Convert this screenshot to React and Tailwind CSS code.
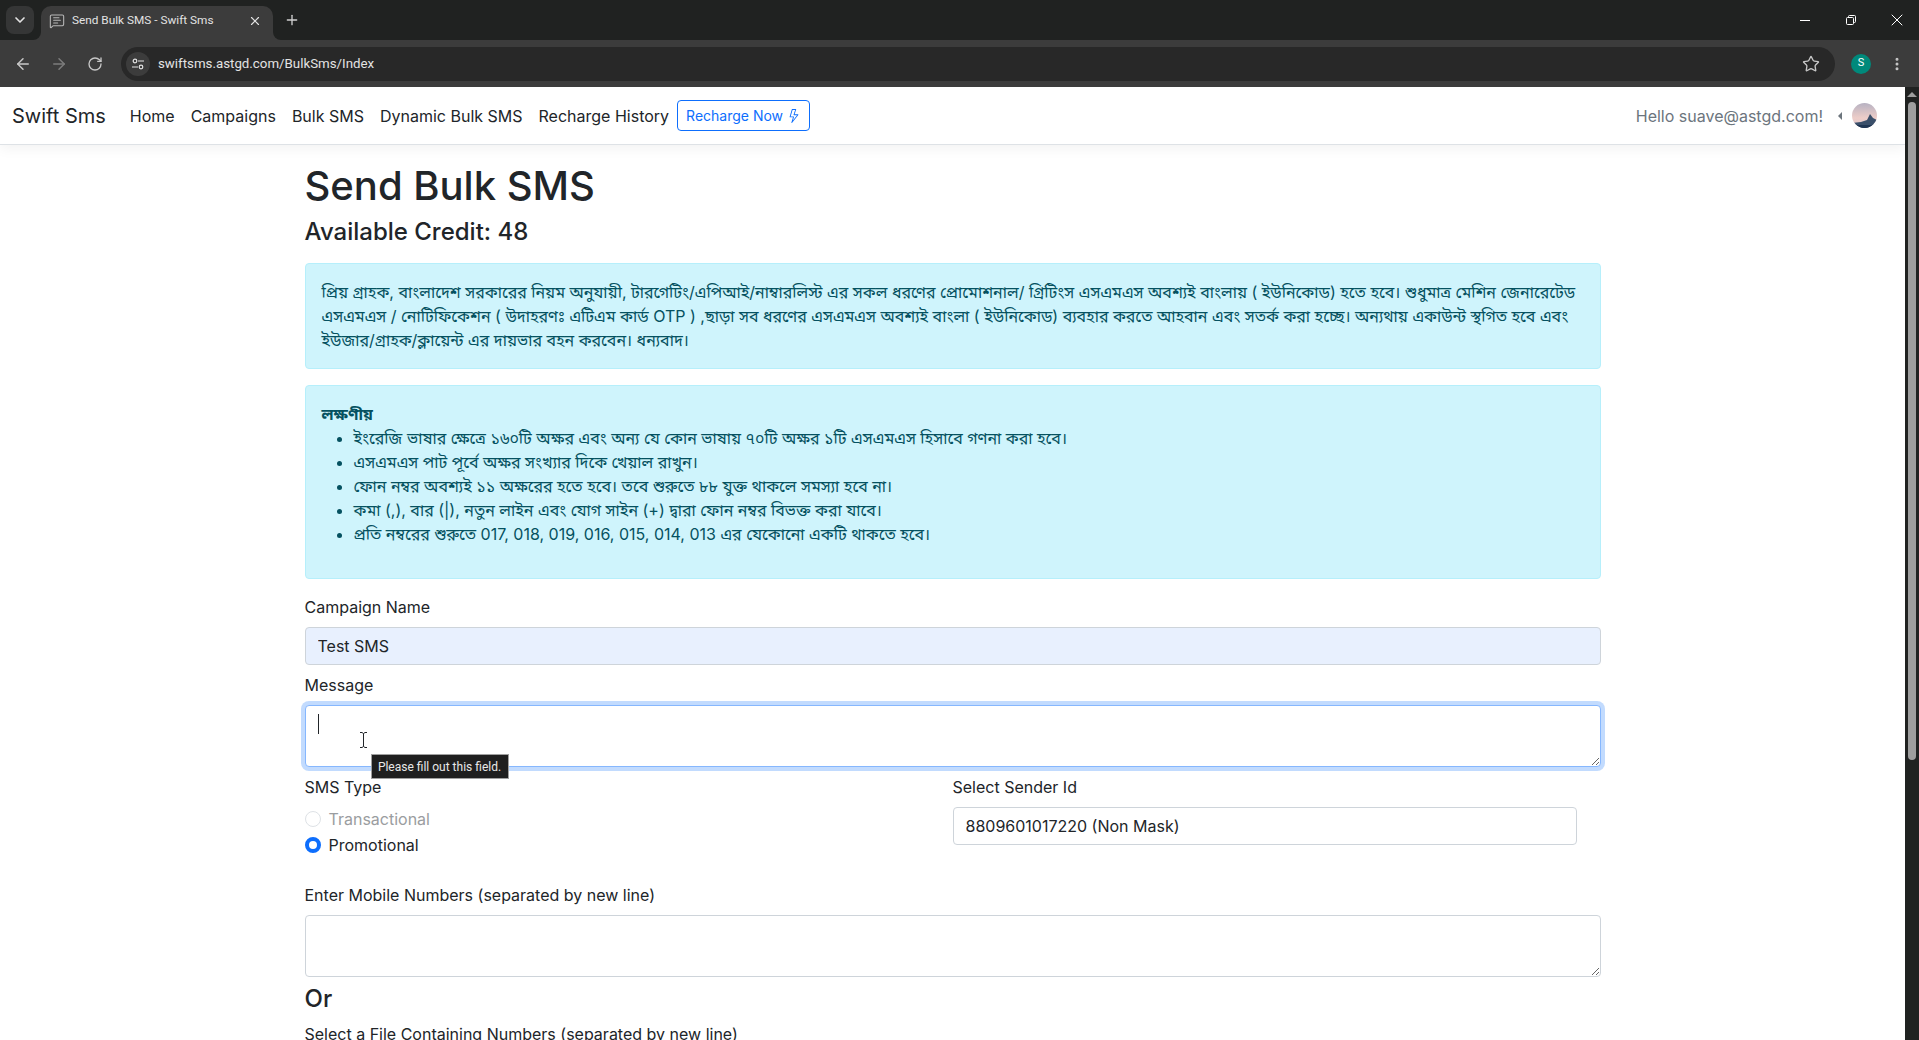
import React from 'react';
import { ArrowLeft, ArrowRight, ChevronDown, MessageSquareText, MoreVertical, Plus, RotateCw, Star, X } from 'lucide-react';

const inter = 'font-["Inter","Noto_Sans","Noto_Sans_Bengali","Liberation_Sans",sans-serif]';

const notes = [
    'ইংরেজি ভাষার ক্ষেত্রে ১৬০টি অক্ষর এবং অন্য যে কোন ভাষায় ৭০টি অক্ষর ১টি এসএমএস হিসাবে গণনা করা হবে।',
    'এসএমএস পাট পূর্বে অক্ষর সংখ্যার দিকে খেয়াল রাখুন।',
    'ফোন নম্বর অবশ্যই ১১ অক্ষরের হতে হবে। তবে শুরুতে ৮৮ যুক্ত থাকলে সমস্যা হবে না।',
    'কমা (,), বার (|), নতুন লাইন এবং যোগ সাইন (+) দ্বারা ফোন নম্বর বিভক্ত করা যাবে।',
    'প্রতি নম্বরের শুরুতে 017, 018, 019, 016, 015, 014, 013 এর যেকোনো একটি থাকতে হবে।',
];

const navLinks = ['Home', 'Campaigns', 'Bulk SMS', 'Dynamic Bulk SMS', 'Recharge History'];

// Browser window: tab strip and address bar
const BrowserChrome = () => (
    <div className='font-["Roboto",sans-serif]'>
        <div className="flex h-10 items-end bg-[#202221] pl-[6px]">
            <div className="mb-[6px] flex h-[28px] w-[28px] items-center justify-center rounded-lg bg-[#353636]">
                <ChevronDown className="h-4 w-4 text-[#e3e3e3]" strokeWidth={2.5} />
            </div>
            <div className="relative ml-[7px] flex h-[34px] w-[232px] items-center rounded-t-[10px] bg-[#3c3c3c] pb-[5px] pl-2 pr-[11px]">
                <span className="absolute -left-2 bottom-0 h-2 w-2 bg-[#3c3c3c]">
                    <span className="block h-2 w-2 rounded-br-lg bg-[#202221]" />
                </span>
                <span className="absolute -right-2 bottom-0 h-2 w-2 bg-[#3c3c3c]">
                    <span className="block h-2 w-2 rounded-bl-lg bg-[#202221]" />
                </span>
                <MessageSquareText className="h-4 w-4 text-[#b8b8b8]" strokeWidth={1.6} />
                <span className="ml-[7px] flex-1 text-[11.8px] text-[#e3e3e3]">Send Bulk SMS - Swift Sms</span>
                <X className="h-[14px] w-[14px] text-[#e3e3e3]" strokeWidth={2} />
            </div>
            <Plus className="mb-[12px] ml-[11px] h-4 w-4 text-[#d0d0d0]" strokeWidth={2} />
            <div className="flex-1" />
            <div className="mb-[10px] flex items-center pr-[12px] text-white">
                <span className="mr-[36px] h-px w-[10px] bg-white" />
                <svg className="mr-[31px] h-[10px] w-[10px]" viewBox="0 0 10 10" fill="none" stroke="currentColor" strokeWidth="1">
                    <rect x="0.5" y="2.5" width="7" height="7" rx="1" />
                    <path d="M2.5 2.5V1.5a1 1 0 0 1 1-1h5a1 1 0 0 1 1 1v5a1 1 0 0 1-1 1h-1" />
                </svg>
                <X className="h-5 w-5" strokeWidth={1.2} />
            </div>
        </div>
        <div className="flex h-[47px] items-center bg-[#3c3c3c] pl-[14px] pr-[14px]">
            <ArrowLeft className="h-[18px] w-[18px] text-[#c7c7c7]" strokeWidth={2} />
            <ArrowRight className="ml-[18px] h-[18px] w-[18px] text-[#7c7c7c]" strokeWidth={2} />
            <RotateCw className="ml-[19px] h-4 w-4 text-[#c7c7c7]" strokeWidth={2} />
            <div className="ml-[18px] flex h-[34px] flex-1 items-center rounded-full bg-[#282828] pl-[5px] pr-[15px]">
                <span className="flex h-6 w-6 items-center justify-center rounded-full bg-[#3c3c3c]">
                    <svg className="h-[14px] w-[14px] text-[#e3e3e3]" viewBox="0 0 14 14" fill="none" stroke="currentColor" strokeWidth="1.2">
                        <circle cx="4" cy="4" r="1.8" />
                        <path d="M7 4h6M1 10h6" />
                        <circle cx="10" cy="10" r="1.8" />
                    </svg>
                </span>
                <span className="ml-[8px] flex-1 text-[13.3px] text-[#e3e3e3]">swiftsms.astgd.com/BulkSms/Index</span>
                <Star className="h-[18px] w-[18px] text-[#c7c7c7]" strokeWidth={1.8} />
            </div>
            <span className="ml-[16px] flex h-5 w-5 items-center justify-center rounded-full bg-[#00897b] text-[11px] text-white">S</span>
            <MoreVertical className="ml-[18px] h-4 w-4 text-[#c7c7c7]" strokeWidth={2.5} />
        </div>
    </div>
);

const Avatar = () => (
    <svg className="h-[25px] w-[25px]" viewBox="0 0 25 25">
        <defs>
            <linearGradient id="sky" x1="0" y1="0" x2="0" y2="1">
                <stop offset="0" stopColor="#b7b2c2" />
                <stop offset="0.6" stopColor="#edcdc8" />
                <stop offset="1" stopColor="#dcc6cf" />
            </linearGradient>
            <clipPath id="round">
                <circle cx="12.5" cy="12.5" r="12.5" />
            </clipPath>
        </defs>
        <g clipPath="url(#round)">
            <rect width="25" height="25" fill="url(#sky)" />
            <path d="M0 20l9-1 6-2 3-6 3 4 4 2v8H0z" fill="#3a4f6a" />
            <path d="M0 22h25v3H0z" fill="#1f3553" />
        </g>
    </svg>
);

const Navbar = () => (
    <nav className="flex h-[58px] items-center border-b border-[#dee2e6] bg-white pl-3 pr-[28px] shadow-[0_4px_12px_rgba(0,0,0,0.05)]">
        <span className="mr-[16px] text-[20px] text-[#212529]">Swift Sms</span>
        {navLinks.map(link => (
            <span key={link} className="px-2 text-[#212529]">{link}</span>
        ))}
        <button className="flex h-[31px] items-center gap-1 rounded border border-[#0d6efd] px-2 text-[14px] text-[#0d6efd]">
            Recharge Now
            <svg className="h-[14px] w-[14px]" viewBox="0 0 16 16" fill="currentColor">
                <path d="M5.52.359A.5.5 0 0 1 6 0h4a.5.5 0 0 1 .474.658L8.694 6H12.5a.5.5 0 0 1 .395.807l-7 9a.5.5 0 0 1-.873-.454L6.823 9.5H3.5a.5.5 0 0 1-.48-.641l2.5-8.5zM6.374 1 4.168 8.5H7.5a.5.5 0 0 1 .478.647L6.78 13.04 11.478 7H8a.5.5 0 0 1-.474-.658L9.306 1H6.374z" />
            </svg>
        </button>
        <div className="flex-1" />
        <span className="text-[#6c757d]">Hello suave@astgd.com!</span>
        <span className="ml-[15px] mr-[10px] h-0 w-0 border-y-[4px] border-r-[4px] border-y-transparent border-r-[#6c757d]" />
        <Avatar />
    </nav>
);

const FieldLabel = ({ children, className = '' }) => (
    <label className={`mb-2 block h-6 leading-6 text-[#212529] ${className}`}>{children}</label>
);

const SendForm = () => (
    <form className="text-[#212529]">
        <FieldLabel>Campaign Name</FieldLabel>
        <input
            readOnly
            value="Test SMS"
            className="block h-[38px] w-full rounded border border-[#ced4da] bg-[#e8f0fe] px-3 text-[#212529] outline-none"
        />

        <FieldLabel className="mt-[8px]">Message</FieldLabel>
        <div className="relative">
            <textarea className="block h-[62px] w-full resize-y rounded border border-[#86b7fe] bg-white px-3 py-[6px] shadow-[0_0_0_4px_rgba(13,110,253,0.25)] outline-none" />
            {/* text caret, mouse pointer and the browser's validation bubble */}
            <span className="absolute left-[13px] top-[9px] h-5 w-px bg-[#212529]" />
            <svg className="absolute left-[54px] top-[27px] h-4 w-[9px] text-[#212529]" viewBox="0 0 9 16" fill="none" stroke="currentColor" strokeWidth="1">
                <path d="M1 .5h2l1.5 1 1.5-1h2M4.5 1.5v13M1 15.5h2l1.5-1 1.5 1h2" />
            </svg>
            <div className='absolute left-[66px] top-[49px] flex h-[25px] w-[138px] items-center justify-center border border-[#a0a0a0] bg-[#1f1f1f] font-["Roboto",sans-serif] text-[12px] text-[#e8e8e8]'>
                Please fill out this field.
            </div>
        </div>

        <div className="mt-2 grid grid-cols-2">
            <div>
                <FieldLabel>SMS Type</FieldLabel>
                <div className="flex h-6 items-center">
                    <input type="radio" disabled className="h-4 w-4 appearance-none rounded-full border border-[#dee2e6] bg-white" />
                    <span className="ml-2 text-[#9a9da0]">Transactional</span>
                </div>
                <div className="mt-[2px] flex h-6 items-center">
                    <input type="radio" checked readOnly className="h-4 w-4 appearance-none rounded-full border-[4px] border-[#0d6efd] bg-white" />
                    <span className="ml-2">Promotional</span>
                </div>
            </div>
            <div className="pr-6">
                <FieldLabel>Select Sender Id</FieldLabel>
                <input
                    readOnly
                    value="8809601017220 (Non Mask)"
                    className="block h-[38px] w-full rounded border border-[#ced4da] bg-white px-3 text-[#212529] outline-none"
                />
            </div>
        </div>

        <FieldLabel className="mt-[26px]">Enter Mobile Numbers (separated by new line)</FieldLabel>
        <textarea className="block h-[62px] w-full resize-y rounded border border-[#ced4da] bg-white px-3 py-[6px] outline-none" />

        <h3 className="mt-[5px] text-[24px] font-medium leading-[34px]">Or</h3>
        <FieldLabel className="mt-[6px]">Select a File Containing Numbers (separated by new line)</FieldLabel>
    </form>
);

const App = () => (
    <div className={`flex h-[1040px] flex-col overflow-hidden bg-white ${inter}`}>
        <BrowserChrome />
        <div className="flex min-h-0 flex-1">
            <div className="min-w-0 flex-1 overflow-hidden">
                <Navbar />
                <main className="mx-auto max-w-[1320px] px-3 pt-[17px]">
                    <h1 className="mb-[7px] text-[40px] font-medium leading-[48px] text-[#212529]">Send Bulk SMS</h1>
                    <h4 className="mb-[17px] text-[24px] font-medium leading-[29px] text-[#212529]">Available Credit: 48</h4>

                    <div className="mb-4 rounded border border-[#b6effb] bg-[#cff4fc] p-4 leading-6 text-[#055160]">
                        প্রিয় গ্রাহক, বাংলাদেশ সরকারের নিয়ম অনুযায়ী, টারগেটিং/এপিআই/নাম্বারলিস্ট এর সকল ধরণের প্রোমোশনাল/ গ্রিটিংস এসএমএস অবশ্যই বাংলায় ( ইউনিকোড) হতে হবে। শুধুমাত্র মেশিন জেনারেটেড
                        <br />
                        এসএমএস / নোটিফিকেশন ( উদাহরণঃ এটিএম কার্ড OTP ) ,ছাড়া সব ধরণের এসএমএস অবশ্যই বাংলা ( ইউনিকোড) ব্যবহার করতে আহবান এবং সতর্ক করা হচ্ছে। অন্যথায় একাউন্ট স্থগিত হবে এবং
                        <br />
                        ইউজার/গ্রাহক/ক্লায়েন্ট এর দায়ভার বহন করবেন। ধন্যবাদ।
                    </div>

                    <div className="mb-4 rounded border border-[#b6effb] bg-[#cff4fc] p-4 leading-6 text-[#055160]">
                        <div className="font-bold">লক্ষণীয়</div>
                        <ul className="mb-4 list-disc pl-8">
                            {notes.map(note => (
                                <li key={note}>{note}</li>
                            ))}
                        </ul>
                    </div>

                    <SendForm />
                </main>
            </div>

            {/* page scrollbar */}
            <div className="flex w-[14px] flex-col items-center bg-[#202221]">
                <span className="mt-[5px] h-0 w-0 border-x-[5px] border-b-[5px] border-x-transparent border-b-[#9e9e9e]" />
                <div className="mt-[5px] h-[658px] w-2 rounded-full bg-[#9e9e9e]" />
            </div>
        </div>
    </div>
);

export default App;
